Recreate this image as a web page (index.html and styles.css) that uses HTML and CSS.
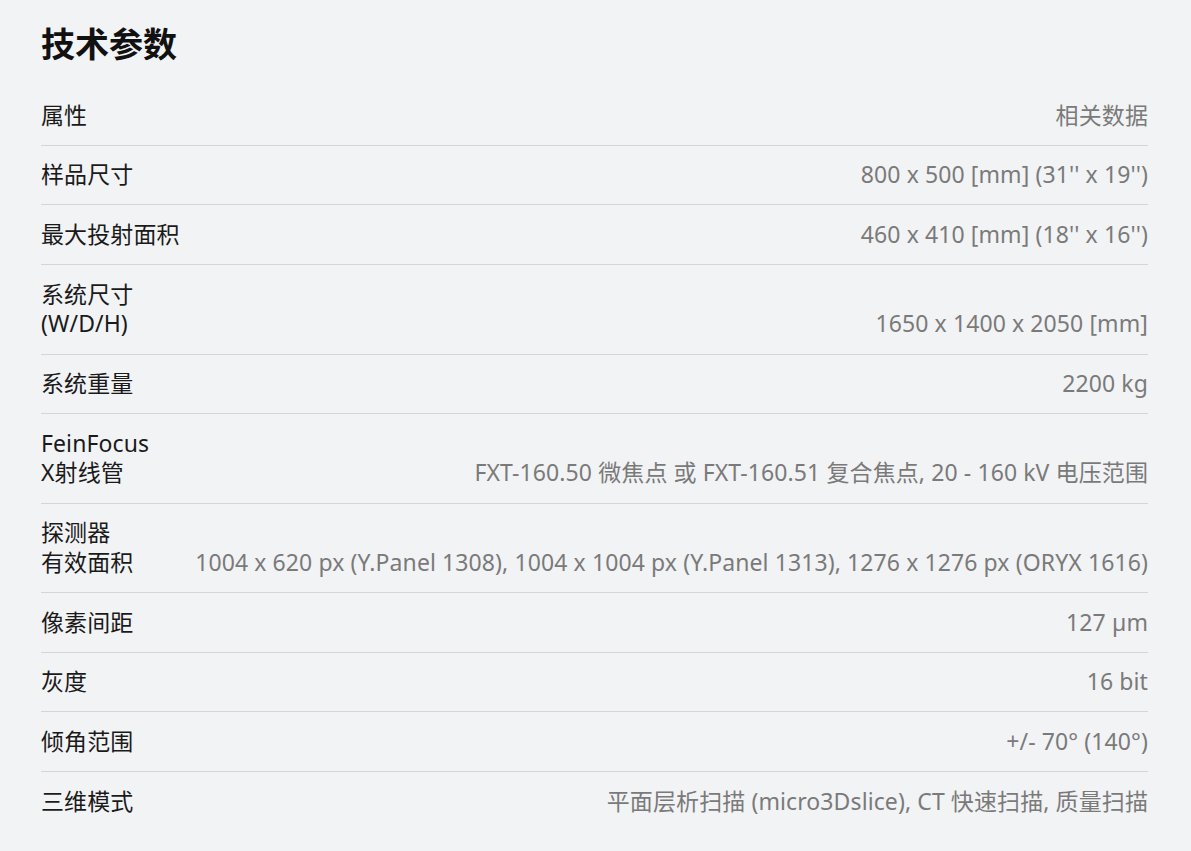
FILE: index.html
```html
<!DOCTYPE html>
<html lang="zh-CN">
<head>
<meta charset="utf-8">
<title>技术参数</title>
<link rel="stylesheet" href="styles.css">
</head>
<body>
<main class="specs">
  <h2 class="specs-title">技术参数</h2>
  <div class="spec-table">
    <div class="spec-row">
      <div class="spec-label">属性</div>
      <div class="spec-value">相关数据</div>
    </div>
    <div class="spec-row">
      <div class="spec-label">样品尺寸</div>
      <div class="spec-value">800 x 500 [mm] (31'' x 19'')</div>
    </div>
    <div class="spec-row">
      <div class="spec-label">最大投射面积</div>
      <div class="spec-value">460 x 410 [mm] (18'' x 16'')</div>
    </div>
    <div class="spec-row">
      <div class="spec-label">系统尺寸<br>(W/D/H)</div>
      <div class="spec-value">1650 x 1400 x 2050 [mm]</div>
    </div>
    <div class="spec-row">
      <div class="spec-label">系统重量</div>
      <div class="spec-value">2200 kg</div>
    </div>
    <div class="spec-row">
      <div class="spec-label">FeinFocus<br>X射线管</div>
      <div class="spec-value">FXT-160.50 微焦点 或 FXT-160.51 复合焦点, 20 - 160 kV 电压范围</div>
    </div>
    <div class="spec-row">
      <div class="spec-label">探测器<br>有效面积</div>
      <div class="spec-value">1004 x 620 px (Y.Panel 1308), 1004 x 1004 px (Y.Panel 1313), 1276 x 1276 px (ORYX 1616)</div>
    </div>
    <div class="spec-row">
      <div class="spec-label">像素间距</div>
      <div class="spec-value">127 µm</div>
    </div>
    <div class="spec-row">
      <div class="spec-label">灰度</div>
      <div class="spec-value">16 bit</div>
    </div>
    <div class="spec-row">
      <div class="spec-label">倾角范围</div>
      <div class="spec-value">+/- 70° (140°)</div>
    </div>
    <div class="spec-row">
      <div class="spec-label">三维模式</div>
      <div class="spec-value">平面层析扫描 (micro3Dslice), CT 快速扫描, 质量扫描</div>
    </div>
  </div>
</main>
</body>
</html>
```
FILE: styles.css
```css
html, body {
  margin: 0;
  padding: 0;
  background: #f2f3f5;
}
body {
  font-family: "Noto Sans", "Noto Sans CJK SC", sans-serif;
  color: #1a1a1a;
}
.specs {
  padding: 22px 43px 0 41px;
}
.specs-title {
  margin: 0 0 20px 0;
  font-size: 34px;
  line-height: 44px;
  font-weight: 700;
  color: #111;
}
.spec-table {
  display: flex;
  flex-direction: column;
}
.spec-row {
  display: flex;
  justify-content: space-between;
  align-items: flex-end;
  gap: 24px;
  padding: 14.5px 0;
  font-size: 23px;
  letter-spacing: 0.1px;
  line-height: 29.7px;
  border-bottom: 1px solid #d4d5d8;
}
.spec-row:last-child {
  border-bottom: none;
}
.spec-label {
  flex: 0 0 auto;
  color: #1a1a1a;
  white-space: nowrap;
}
.spec-value {
  text-align: right;
  color: #7a7a7a;
}
```
